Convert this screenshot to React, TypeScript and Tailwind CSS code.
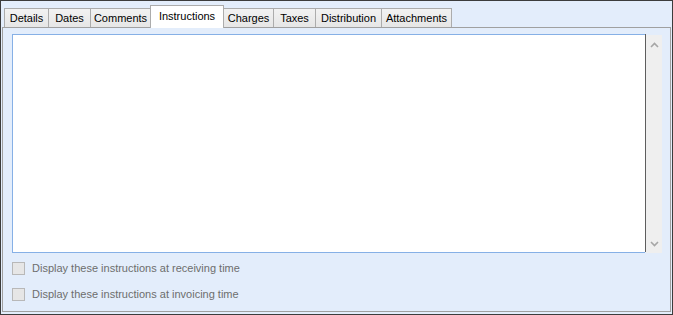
import React from "react";

const tabs = [
  { label: "Details", w: "w-[45px]" },
  { label: "Dates", w: "w-[43px]" },
  { label: "Comments", w: "w-[61px]" },
  { label: "Instructions", w: "w-[74px]", active: true },
  { label: "Charges", w: "w-[51px]" },
  { label: "Taxes", w: "w-[43px]" },
  { label: "Distribution", w: "w-[67px]" },
  { label: "Attachments", w: "w-[71px]" },
];

const Chevron: React.FC<{ up?: boolean }> = ({ up }) => (
  <svg width="9" height="6" viewBox="0 0 9 6" className="block">
    <path
      d={up ? "M1 5 L4.5 1.5 L8 5" : "M1 1 L4.5 4.5 L8 1"}
      fill="none"
      stroke="#a6a6a6"
      strokeWidth="1.6"
    />
  </svg>
);

const CheckRow: React.FC<{ label: string }> = ({ label }) => (
  <label className="flex items-center gap-[7px] h-[13px]">
    <span className="w-[13px] h-[13px] border border-[#b8b8b8] bg-[#e6e6e6] shrink-0" />
    <span className="text-[#6d6d6d] leading-none">{label}</span>
  </label>
);

export default function App() {
  return (
    <div className="w-[673px] h-[315px] border border-[#3c3c3c] bg-[#e3edfb] flex flex-col px-[1px] pb-[2px] font-['Liberation_Sans',Arial,sans-serif] text-[11px] text-black">
      {/* tab strip */}
      <div className="flex items-end h-[26px] pl-[2px] relative z-10">
        {tabs.map((t, i) =>
          t.active ? (
            <div
              key={t.label}
              className={`${t.w} h-[23px] -mb-[1px] ${i > 0 ? "-ml-px" : ""} border border-b-0 border-[#acacac] bg-white flex items-start justify-center pt-[2px] relative z-10`}
            >
              {t.label}
            </div>
          ) : (
            <div
              key={t.label}
              className={`${t.w} h-[19px] ${i > 0 ? "-ml-px" : ""} border border-b-0 border-[#acacac] bg-gradient-to-b from-[#f2f2f2] to-[#e6e6e6] flex items-center justify-center`}
            >
              {t.label}
            </div>
          )
        )}
      </div>

      {/* panel */}
      <div className="flex-1 border border-[#a0a0a0] bg-[#e3edfb] pl-[9px] pr-[8px] pt-[6px] flex flex-col">
        <div className="flex h-[219px] w-[650px]">
          <div className="flex-1 bg-white border-l border-t border-b border-[#86b0e6] border-r-0" />
          <div className="w-px bg-[#5e5e5e] mb-[1px]" />
          <div className="w-[16px] bg-[#efefef] flex flex-col items-center justify-between pt-[7px] pb-[6px] mt-[1px]">
            <Chevron up />
            <Chevron />
          </div>
        </div>
        <div className="flex flex-col gap-[13px] mt-[9px]">
          <CheckRow label="Display these instructions at receiving time" />
          <CheckRow label="Display these instructions at invoicing time" />
        </div>
      </div>
    </div>
  );
}
